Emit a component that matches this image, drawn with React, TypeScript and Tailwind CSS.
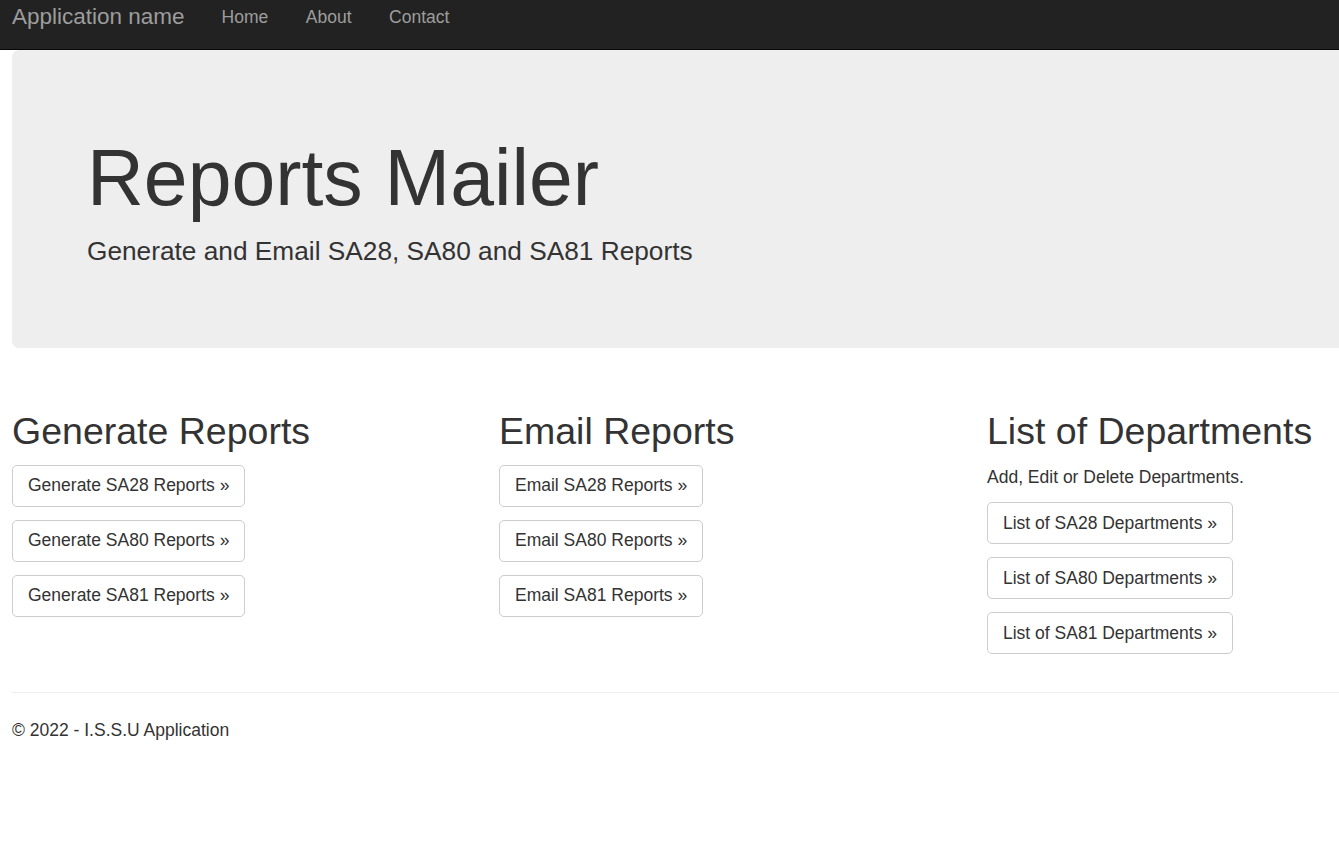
const navLinks = ["Home", "About", "Contact"];

const columns = [
  {
    title: "Generate Reports",
    lead: null as string | null,
    buttons: ["Generate SA28 Reports »", "Generate SA80 Reports »", "Generate SA81 Reports »"],
  },
  {
    title: "Email Reports",
    lead: null as string | null,
    buttons: ["Email SA28 Reports »", "Email SA80 Reports »", "Email SA81 Reports »"],
  },
  {
    title: "List of Departments",
    lead: "Add, Edit or Delete Departments.",
    buttons: ["List of SA28 Departments »", "List of SA80 Departments »", "List of SA81 Departments »"],
  },
];

export default function App() {
  return (
    <div className="w-full min-h-[862px] overflow-hidden bg-white text-[#333] font-['Liberation_Sans',Arial,sans-serif]">
      {/* Navbar */}
      <nav className="h-[50px] bg-[#222] border-b border-[#080808] flex items-start">
        <a className="ml-[12px] mt-[4px] text-[22.5px] leading-[25px] text-[#9d9d9d] whitespace-nowrap">
          Application name
        </a>
        <ul className="flex ml-[37px] mt-[5px] gap-[37.5px]">
          {navLinks.map((l) => (
            <li key={l} className="text-[17.5px] leading-[25px] text-[#9d9d9d]">
              {l}
            </li>
          ))}
        </ul>
      </nav>

      {/* Body content */}
      <div className="ml-[12px] w-[1425px]">
        {/* Jumbotron */}
        <div className="bg-[#eee] rounded-[7px] px-[75px] pt-[60px] pb-[58px] mb-[37.5px]">
          <h1 className="mt-[25px] mb-[11.5px] text-[78.75px] leading-[86.6px] text-[#333]">Reports Mailer</h1>
          <p className="mb-[19.75px] text-[26.25px] leading-[37.5px] font-light">
            Generate and Email SA28, SA80 and SA81 Reports
          </p>
        </div>

        {/* Columns */}
        <div className="grid grid-cols-[487px_488px_450px]">
          {columns.map((c) => (
            <div key={c.title}>
              <h2 className="mt-[25px] mb-[12.5px] text-[37.5px] leading-[41.25px] whitespace-nowrap">{c.title}</h2>
              {c.lead && <p className="mb-[12.5px] text-[17.5px] leading-[25px]">{c.lead}</p>}
              {c.buttons.map((b) => (
                <div key={b} className="mb-[13px]">
                  <a className="inline-block bg-white border border-[#ccc] rounded-[5px] px-[15px] py-[7.5px] text-[17.5px] leading-[25px] text-[#333] whitespace-nowrap">
                    {b}
                  </a>
                </div>
              ))}
            </div>
          ))}
        </div>

        {/* Footer */}
        <hr className="mt-[25px] mb-[25px] border-0 border-t border-[#eee]" />
        <footer>
          <p className="mb-[12.5px] text-[17.5px] leading-[25px]">© 2022 - I.S.S.U Application</p>
        </footer>
      </div>
    </div>
  );
}
